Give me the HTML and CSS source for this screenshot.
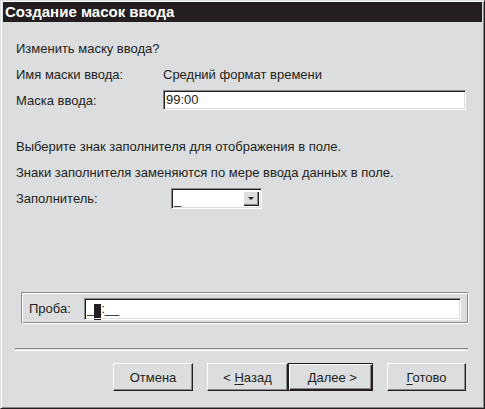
FILE: index.html
```html
<!DOCTYPE html>
<html lang="ru">
  <head>
    <meta charset="UTF-8" />
    <title>Создание масок ввода</title>
    <link rel="stylesheet" href="styles.css">
  </head>
  <body>
    <div class="wizard">
      <div class="wizard-title">Создание масок ввода</div>

      <div class="wizard-body">
        <div class="row">Изменить маску ввода?</div>

        <div class="row">
          <span class="label">Имя маски ввода:</span>
          <span>Средний формат времени</span>
        </div>
        <div class="row">
          <span class="label">Маска ввода:</span>
          <div class="textbox mask-input">99:00</div>
        </div>

        <div class="row row-gap">Выберите знак заполнителя для отображения в поле.</div>
        <div class="row">Знаки заполнителя заменяются по мере ввода данных в поле.</div>
        <div class="row">
          <span class="label">Заполнитель:</span>
          <div class="textbox combo">
            <span class="combo-value">_</span>
            <span class="combo-button"><span class="arrow"></span></span>
          </div>
        </div>

        <div class="spacer"></div>

        <div class="groupbox">
          <span class="probe-label">Проба:</span>
          <div class="textbox probe-input">_<span class="caret">_</span>:__</div>
        </div>

        <div class="separator"></div>

        <div class="buttons">
          <button class="btn btn-cancel">Отмена</button>
          <div class="nav-pair">
            <button class="btn btn-back">&lt; <u>Н</u>азад</button>
            <button class="btn btn-next default">&nbsp;<u>Д</u>алее &gt;</button>
          </div>
          <button class="btn btn-finish"><u>Г</u>отово</button>
        </div>
      </div>
    </div>
  </body>
</html>
```

FILE: styles.css
```css
body {
  margin: 0;
  font-family: "Liberation Sans", Arial, sans-serif;
  font-size: 13px;
  color: #231f20;
  background: #dcdddf;
}
.wizard {
  box-sizing: border-box;
  width: 485px;
  height: 409px;
  display: flex;
  flex-direction: column;
  background: #dcdddf;
  border-left: 1px solid #dcdddf;
  border-top: 1px solid #dcdddf;
  border-right: 1px solid #231f20;
  border-bottom: 1px solid #231f20;
  box-shadow: inset 1px 1px #ffffff, inset -1px -1px #8a8a8c;
  padding: 1px 2px 2px 2px;
}
.wizard-title {
  height: 20px;
  line-height: 20px;
  background: #231f20;
  color: #fff;
  font-weight: bold;
  font-size: 15px;
  padding-left: 2px;
}
.wizard-body {
  flex: 1;
  display: flex;
  flex-direction: column;
  padding: 13px 16px 15px 13px;
}
.row {
  height: 26px;
  display: flex;
  align-items: center;
}
.row-gap {
  margin-top: 20px;
}
.label {
  width: 147px;
  flex-shrink: 0;
}
.textbox {
  box-sizing: border-box;
  background: #fff;
  border-top: 1px solid #8a8a8c;
  border-left: 1px solid #8a8a8c;
  border-right: 1px solid #fff;
  border-bottom: 1px solid #fff;
  box-shadow: inset 1px 1px #231f20, inset -1px -1px #dcdddf;
}
.mask-input {
  width: 303px;
  height: 20px;
  line-height: 18px;
  padding-left: 2px;
}
.combo {
  margin-left: 8px;
  width: 91px;
  height: 21px;
  display: flex;
  align-items: stretch;
  padding: 2px;
}
.combo-value {
  flex: 1;
  line-height: 17px;
}
.combo-button {
  width: 16px;
  display: flex;
  align-items: center;
  justify-content: center;
  background: #dcdddf;
  box-shadow: inset 1px 1px #fff, inset -1px -1px #231f20, inset -2px -2px #8a8a8c;
}
.arrow {
  width: 0;
  height: 0;
  border-left: 3px solid transparent;
  border-right: 3px solid transparent;
  border-top: 3px solid #231f20;
}
.spacer {
  flex: 1;
}
.groupbox {
  box-sizing: border-box;
  margin-left: 5px;
  width: 448px;
  height: 32px;
  display: flex;
  align-items: center;
  border-top: 1px solid #8a8a8c;
  border-left: 1px solid #8a8a8c;
  border-right: 1px solid #fff;
  border-bottom: 1px solid #fff;
  box-shadow: inset 1px 1px #fff, inset -1px -1px #8a8a8c;
  padding: 0 7px 0 7px;
}
.probe-label {
  width: 55px;
}
.probe-input {
  flex: 1;
  height: 22px;
  line-height: 20px;
  padding-left: 2px;
  margin-top: 2px;
}
.caret {
  display: inline-block;
  width: 7px;
  height: 16px;
  line-height: 16px;
  vertical-align: -3px;
  background: #231f20;
  color: #fff;
}
.separator {
  margin: 24px 0 12px -1px;
  height: 1px;
  width: 453px;
  border-top: 1px solid #8a8a8c;
  border-bottom: 1px solid #fff;
}
.buttons {
  display: flex;
  justify-content: flex-end;
  gap: 14px;
}
.nav-pair {
  display: flex;
}
.btn {
  box-sizing: border-box;
  height: 28px;
  font-family: inherit;
  font-size: 13px;
  color: #231f20;
  background: #dcdddf;
  border-top: 1px solid #fff;
  border-left: 1px solid #fff;
  border-right: 1px solid #231f20;
  border-bottom: 1px solid #231f20;
  box-shadow: inset -1px -1px #8a8a8c;
  padding: 0;
}
.btn-cancel {
  width: 80px;
}
.btn-back {
  width: 81px;
}
.btn-next {
  width: 85px;
}
.btn-finish {
  width: 79px;
}
.default {
  border: 1px solid #231f20;
  box-shadow: inset 1px 1px #fff, inset -1px -1px #231f20, inset -2px -2px #8a8a8c;
}
.btn u {
  text-underline-offset: 2px;
}
```
